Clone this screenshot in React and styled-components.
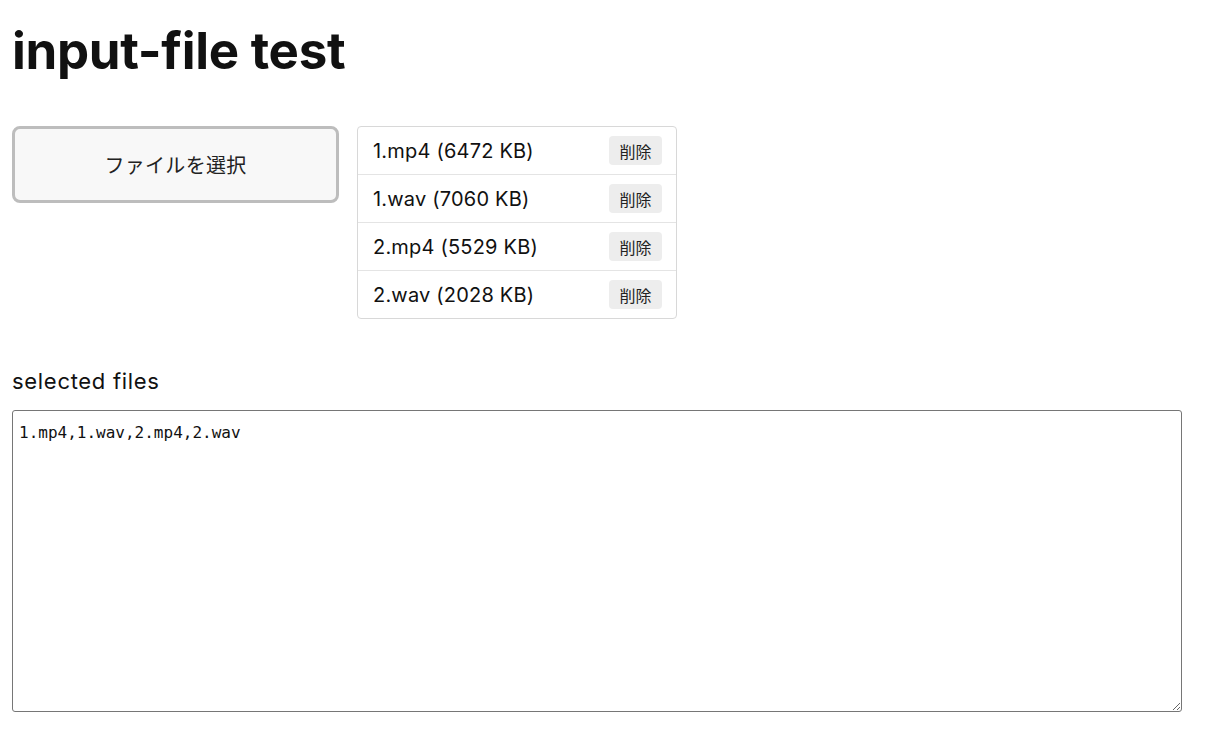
import React, { useState } from "react";
import styled, { createGlobalStyle } from "styled-components";

const GlobalStyle = createGlobalStyle`
  body {
    margin: 0;
    padding: 0 12px;
    background: #fff;
    color: #111;
    font-family: Inter, "Noto Sans CJK JP", sans-serif;
  }
`;

const Title = styled.h1`
  font-size: 51px;
  font-weight: 700;
  line-height: 1;
  margin: 25px 0 0 0;
  letter-spacing: -0.3px;
`;

const TopRow = styled.div`
  display: flex;
  align-items: flex-start;
  gap: 18px;
  margin-top: 50px;
`;

const SelectButton = styled.label`
  box-sizing: border-box;
  width: 327px;
  height: 77px;
  display: flex;
  align-items: center;
  justify-content: center;
  background: #f8f8f8;
  border: 3px solid #bdbdbd;
  border-radius: 8px;
  font-family: "Noto Sans CJK JP", sans-serif;
  font-size: 20px;
  letter-spacing: 0.3px;
  color: #222;
  cursor: pointer;
`;

const FileList = styled.ul`
  list-style: none;
  margin: 0;
  padding: 0;
  width: 320px;
  box-sizing: border-box;
  border: 1px solid #d8d8d8;
  border-radius: 4px;
`;

const FileRow = styled.li`
  display: flex;
  align-items: center;
  justify-content: space-between;
  height: ${(p) => (p.$first ? "47px" : "48px")};
  box-sizing: border-box;
  padding: 0 14px 0 15px;
  font-size: 20px;
  letter-spacing: 0.2px;
  border-top: ${(p) => (p.$first ? "none" : "1px solid #e4e4e4")};
`;

const DeleteButton = styled.button`
  border: none;
  background: #ededed;
  border-radius: 4px;
  width: 53px;
  height: 29px;
  font-family: "Noto Sans CJK JP", sans-serif;
  font-size: 16px;
  color: #222;
  padding: 0;
`;

const Label = styled.p`
  font-size: 22px;
  letter-spacing: 0.7px;
  margin: 49px 0 16px 0;
  line-height: 1.2;
`;

const FileArea = styled.textarea`
  display: block;
  box-sizing: border-box;
  width: 1170px;
  height: 302px;
  border: 1px solid #767676;
  border-radius: 3px;
  padding: 12px 6px;
  font-family: "DejaVu Sans Mono", "Liberation Mono", monospace;
  font-size: 16px;
  color: #111;
  resize: both;
`;

const initialFiles = [
  { name: "1.mp4", size: 6472 },
  { name: "1.wav", size: 7060 },
  { name: "2.mp4", size: 5529 },
  { name: "2.wav", size: 2028 },
];

export default function App() {
  const [files, setFiles] = useState(initialFiles);

  return (
    <>
      <GlobalStyle />
      <Title>input-file test</Title>
      <TopRow>
        <SelectButton>ファイルを選択</SelectButton>
        <FileList>
          {files.map((f, i) => (
            <FileRow key={f.name} $first={i === 0}>
              <span>
                {f.name} ({f.size} KB)
              </span>
              <DeleteButton
                onClick={() => setFiles((arr) => arr.filter((x) => x.name !== f.name))}
              >
                削除
              </DeleteButton>
            </FileRow>
          ))}
        </FileList>
      </TopRow>
      <Label>selected files</Label>
      <FileArea readOnly value={files.map((f) => f.name).join(",")} />
    </>
  );
}
